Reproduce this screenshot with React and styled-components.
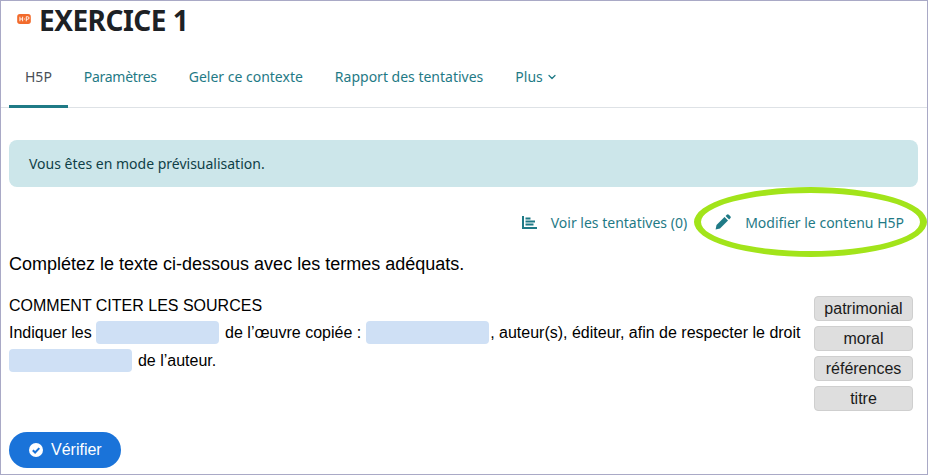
import React from 'react';
import styled, { createGlobalStyle } from 'styled-components';
import { ChevronDown } from 'lucide-react';

const Global = createGlobalStyle`
  html, body { margin: 0; padding: 0; background: #fff; }
  body { width: 928px; height: 475px; overflow: hidden; }
`;
const Frame = styled.div`
  position: relative; box-sizing: border-box; width: 928px; height: 475px;
  border: 1px solid #a9a9c6; overflow: hidden; background: #fff;
  font-family: "Noto Sans", "Open Sans", sans-serif; color: #1d2125;
`;
const TitleRow = styled.header`
  display: flex; align-items: center; gap: 8px; height: 39px; padding-left: 16px;
`;
const IconSlot = styled.span`
  display: flex; margin-bottom: 3px;
`;
const Title = styled.h1`
  margin: 0; font-size: 28px; font-weight: 700; line-height: 39px; letter-spacing: -0.5px;
`;
const Tabs = styled.nav`
  display: flex; height: 59px; margin-top: 8px; padding-left: 8px; border-bottom: 1px solid #dee2e6;
`;
const Tab = styled.a`
  display: flex; align-items: center; gap: 3px; padding: 0 16px; font-size: 14px; box-sizing: border-box; height: 60px;
  letter-spacing: ${p => (p.$tight ? '-0.3px' : '0')};
  color: ${p => (p.$active ? '#495057' : '#1f7a86')};
  border-bottom: 3px solid ${p => (p.$active ? '#1f7a86' : 'transparent')};
`;
const Content = styled.main`
  padding: 32px 9px 0 8px;
`;
const Alert = styled.div`
  box-sizing: border-box; height: 47px; display: flex; align-items: center; padding: 0 20px;
  background: #cce6ea; border-radius: 8px; font-size: 14px; color: #0f3f47;
`;
const Actions = styled.div`
  display: flex; justify-content: flex-end; align-items: center; height: 24px; margin-top: 23px; padding-right: 14px;
`;
const ActionLink = styled.a`
  display: flex; align-items: center; gap: 14px; margin-left: 28px; font-size: 14px; color: #1f7a86;
`;
const Question = styled.p`
  margin: 18px 0 0; font-family: "Liberation Sans", Arial, sans-serif; font-size: 18px; line-height: 24px; color: #000;
`;
const Task = styled.section`
  display: flex; justify-content: space-between; margin-top: 16px;
  font-family: "Liberation Sans", Arial, sans-serif; color: #000; font-size: 16px;
`;
const Passage = styled.div`
  width: 800px; line-height: 28px;
`;
const Heading = styled.div`
  line-height: 28px; height: 27px;
`;
const Blank = styled.span`
  display: inline-block; width: 123px; height: 23px; background: #cfe0f5; border-radius: 4px; vertical-align: -6px;
  margin-right: 1.5px;
`;
const Words = styled.div`
  display: flex; flex-direction: column; gap: 5px; width: 99px; margin-right: 5px; padding-top: 4px;
`;
const Word = styled.div`
  box-sizing: border-box; height: 25px; line-height: 23px; text-align: center; background: #dedede;
  border: 1px solid #cfcfcf; border-radius: 4px; color: #1a1a1a;
`;
const Verify = styled.button`
  display: flex; align-items: center; gap: 8px; width: 112px; height: 36px; margin-top: 21px; padding: 0 0 0 20px;
  border: 0; border-radius: 18px; background: #1a73d9; color: #fff; font-family: "Liberation Sans", Arial, sans-serif; font-size: 16px;
`;
const Oval = styled.div`
  position: absolute; left: 693px; top: 186px; width: 233px; height: 70px; box-sizing: border-box;
  border-style: solid; border-color: #a2e41a; border-width: 6px 7px; border-radius: 50%; pointer-events: none;
`;

const H5P = () => (
  <svg width="14" height="10" viewBox="0 0 15 11" aria-hidden="true">
    <rect width="15" height="11" rx="3" fill="#f26b2c" />
    <path d="M3 3v5M6 3v5M3 5.5h3M7.5 5.5h1M10 8V3h1.6a1.3 1.3 0 0 1 0 2.8H10" fill="none" stroke="#fff" strokeWidth="1" />
  </svg>
);
const Chart = () => (
  <svg width="15" height="13" viewBox="0 0 15 13" aria-hidden="true">
    <path d="M1 0v12h14" fill="none" stroke="#1f7a86" strokeWidth="2" />
    <path d="M3.5 2.5h5M3.5 5.5h9.5M3.5 8.5h8" stroke="#1f7a86" strokeWidth="1.8" fill="none" />
  </svg>
);
const Pencil = () => (
  <svg width="16" height="16" viewBox="0 0 16 16" aria-hidden="true">
    <path d="M0.6 15.4l.9-4.4 8-8 3.5 3.5-8 8zM10.6 1.9l1.2-1.2a1.4 1.4 0 0 1 2 0l1.5 1.5a1.4 1.4 0 0 1 0 2l-1.2 1.2z" fill="#1f7a86" />
  </svg>
);
const Check = () => (
  <svg width="14" height="14" viewBox="0 0 14 14" aria-hidden="true">
    <circle cx="7" cy="7" r="7" fill="#fff" />
    <path d="M3.8 7.2l2.3 2.3 4.2-4.4" fill="none" stroke="#1a73d9" strokeWidth="2" />
  </svg>
);

export default function App() {
  return (
    <Frame>
      <Global />
      <TitleRow><IconSlot><H5P /></IconSlot><Title>EXERCICE 1</Title></TitleRow>
      <Tabs>
        <Tab $active>H5P</Tab>
        <Tab $tight>Paramètres</Tab>
        <Tab>Geler ce contexte</Tab>
        <Tab>Rapport des tentatives</Tab>
        <Tab>Plus <ChevronDown size={12} strokeWidth={2.5} /></Tab>
      </Tabs>
      <Content>
        <Alert>Vous êtes en mode prévisualisation.</Alert>
        <Actions>
          <ActionLink><Chart />Voir les tentatives (0)</ActionLink>
          <ActionLink><Pencil />Modifier le contenu H5P</ActionLink>
        </Actions>
        <Question>Complétez le texte ci-dessous avec les termes adéquats.</Question>
        <Task>
          <Passage>
            <Heading>COMMENT CITER LES SOURCES</Heading>
            Indiquer les <Blank /> de l’œuvre copiée : <Blank />, auteur(s), éditeur, afin de respecter le droit <Blank /> de l’auteur.
          </Passage>
          <Words>
            <Word>patrimonial</Word>
            <Word>moral</Word>
            <Word>références</Word>
            <Word>titre</Word>
          </Words>
        </Task>
        <Verify><Check />Vérifier</Verify>
      </Content>
      <Oval />
    </Frame>
  );
}
